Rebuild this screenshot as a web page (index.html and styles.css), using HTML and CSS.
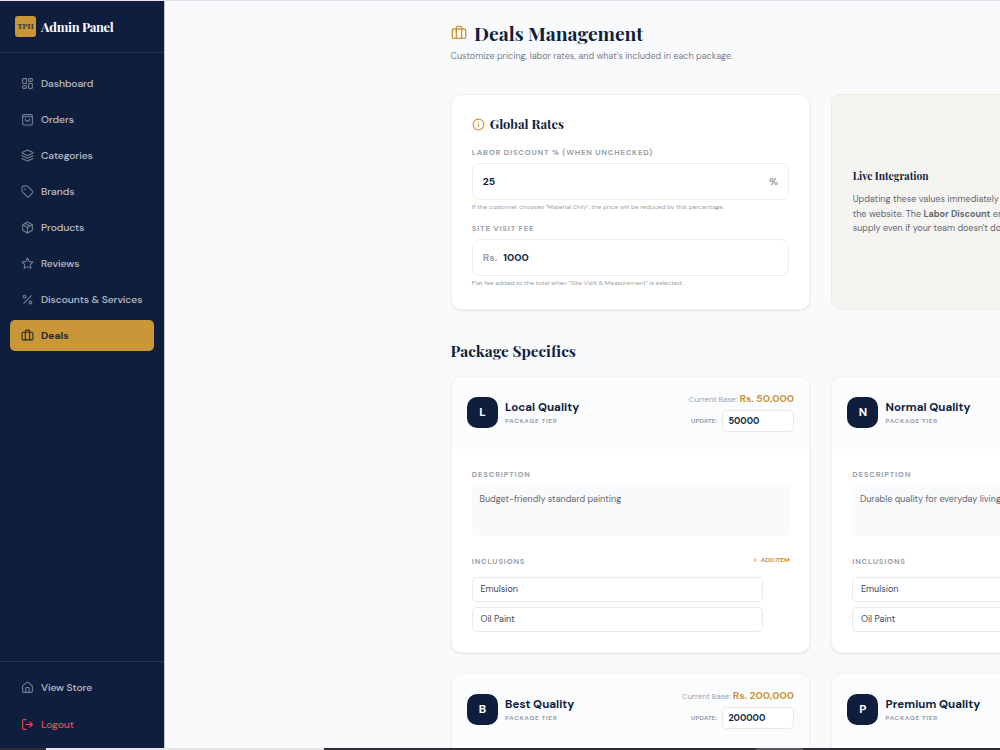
FILE: index.html
```html
<!DOCTYPE html>
<html lang="en">
<head>
    <meta charset="UTF-8">
    <meta name="viewport" content="width=device-width, initial-scale=1.0">
    <title>Deals Management - Admin Panel</title>
    <link rel="stylesheet" href="styles.css">
</head>
<body>
    <div class="app">
        <aside class="sidebar">
            <div class="brand">
                <div class="brand-logo">TPH</div>
                <span class="brand-name">Admin Panel</span>
            </div>
            <nav class="nav">
                <a class="nav-link"><svg class="icon" viewBox="0 0 24 24"><rect x="3" y="3" width="7" height="9" rx="1"/><rect x="14" y="3" width="7" height="5" rx="1"/><rect x="14" y="12" width="7" height="9" rx="1"/><rect x="3" y="16" width="7" height="5" rx="1"/></svg><span>Dashboard</span></a>
                <a class="nav-link"><svg class="icon" viewBox="0 0 24 24"><rect x="3" y="3" width="18" height="19" rx="2.5"/><path d="M3 7h18M8 11a4 4 0 0 0 8 0"/></svg><span>Orders</span></a>
                <a class="nav-link"><svg class="icon" viewBox="0 0 24 24"><path d="M12.8 2.2a2 2 0 0 0-1.6 0L2.6 6.1a1 1 0 0 0 0 1.8l8.6 3.9a2 2 0 0 0 1.6 0l8.6-3.9a1 1 0 0 0 0-1.8z"/><path d="M2 12a1 1 0 0 0 .6.9l8.6 3.9a2 2 0 0 0 1.6 0l8.6-3.9A1 1 0 0 0 22 12"/><path d="M2 17a1 1 0 0 0 .6.9l8.6 3.9a2 2 0 0 0 1.6 0l8.6-3.9A1 1 0 0 0 22 17"/></svg><span>Categories</span></a>
                <a class="nav-link"><svg class="icon" viewBox="0 0 24 24"><path d="M12.6 2.6A2 2 0 0 0 11.2 2H4a2 2 0 0 0-2 2v7.2a2 2 0 0 0 .6 1.4l8.7 8.7a2.4 2.4 0 0 0 3.4 0l6.6-6.6a2.4 2.4 0 0 0 0-3.4z"/><circle cx="7.5" cy="7.5" r=".6"/></svg><span>Brands</span></a>
                <a class="nav-link"><svg class="icon" viewBox="0 0 24 24"><path d="M11 21.7a2 2 0 0 0 2 0l7-4A2 2 0 0 0 21 16V8a2 2 0 0 0-1-1.7l-7-4a2 2 0 0 0-2 0l-7 4A2 2 0 0 0 3 8v8a2 2 0 0 0 1 1.7z"/><path d="M12 22V12M3.3 7L12 12l8.7-5M7.5 4.3l9 5.1"/></svg><span>Products</span></a>
                <a class="nav-link"><svg class="icon" viewBox="0 0 24 24"><path d="M12 2l3.1 6.3 6.9 1-5 4.9 1.2 6.8-6.2-3.2L5.8 21 7 14.2l-5-4.9 6.9-1z"/></svg><span>Reviews</span></a>
                <a class="nav-link"><svg class="icon" viewBox="0 0 24 24"><path d="M19 5L5 19"/><circle cx="6.5" cy="6.5" r="2.5"/><circle cx="17.5" cy="17.5" r="2.5"/></svg><span>Discounts &amp; Services</span></a>
                <a class="nav-link active"><svg class="icon" viewBox="0 0 24 24"><rect x="2" y="6" width="20" height="14" rx="2"/><path d="M8 20V4a2 2 0 0 1 2-2h4a2 2 0 0 1 2 2v16"/></svg><span>Deals</span></a>
            </nav>
            <div class="sidebar-footer">
                <a class="nav-link"><svg class="icon" viewBox="0 0 24 24"><path d="M15 21v-8a1 1 0 0 0-1-1h-4a1 1 0 0 0-1 1v8"/><path d="M3 10a2 2 0 0 1 .7-1.5l7-6a2 2 0 0 1 2.6 0l7 6A2 2 0 0 1 21 10v9a2 2 0 0 1-2 2H5a2 2 0 0 1-2-2z"/></svg><span>View Store</span></a>
                <a class="nav-link logout"><svg class="icon" viewBox="0 0 24 24"><path d="M9 21H5a2 2 0 0 1-2-2V5a2 2 0 0 1 2-2h4M16 17l5-5-5-5M21 12H9"/></svg><span>Logout</span></a>
            </div>
        </aside>

        <main class="main">
            <header class="page-header">
                <h1 class="page-title"><svg class="icon" viewBox="0 0 24 24"><rect x="2" y="6" width="20" height="14" rx="2"/><path d="M8 20V4a2 2 0 0 1 2-2h4a2 2 0 0 1 2 2v16"/></svg><span>Deals Management</span></h1>
                <p class="page-subtitle">Customize pricing, labor rates, and what's included in each package.</p>
            </header>

            <section class="grid">
                <div class="card rates-card">
                    <h2 class="card-title"><svg class="icon" viewBox="0 0 24 24"><circle cx="12" cy="12" r="10"/><path d="M12 16v-4M12 8h.01"/></svg><span>Global Rates</span></h2>
                    <div class="label">LABOR DISCOUNT % (WHEN UNCHECKED)</div>
                    <div class="input"><span>25</span><span class="suffix">%</span></div>
                    <p class="hint">If the customer chooses "Material Only", the price will be reduced by this percentage.</p>
                    <div class="label">SITE VISIT FEE</div>
                    <div class="input"><span class="prefix">Rs.</span><span>1000</span></div>
                    <p class="hint">Flat fee added to the total when "Site Visit &amp; Measurement" is selected.</p>
                </div>
                <div class="card info-card">
                    <h3 class="info-title">Live Integration</h3>
                    <p class="info-text">Updating these values immediately<br>the website. The <b>Labor Discount</b> ensures<br>supply even if your team doesn't do</p>
                </div>
            </section>

            <h2 class="section-title">Package Specifics</h2>

            <section class="grid">
                <div class="card package">
                    <div class="package-head">
                        <div class="badge">L</div>
                        <div class="package-name">
                            <h3>Local Quality</h3>
                            <p>PACKAGE TIER</p>
                        </div>
                        <div class="package-price">
                            <div class="base">Current Base: <span class="amount">Rs. 50,000</span></div>
                            <div class="update"><span class="update-label">UPDATE:</span><span class="price-input">50000</span></div>
                        </div>
                    </div>
                    <div class="package-body">
                        <div class="label">DESCRIPTION</div>
                        <div class="textarea">Budget-friendly standard painting</div>
                        <div class="inclusions-head">
                            <div class="label">INCLUSIONS</div>
                            <div class="add-item"><svg class="icon" viewBox="0 0 24 24"><path d="M5 12h14M12 5v14"/></svg><span>ADD ITEM</span></div>
                        </div>
                        <div class="item">Emulsion</div>
                        <div class="item">Oil Paint</div>
                    </div>
                </div>
                <div class="card package">
                    <div class="package-head">
                        <div class="badge">N</div>
                        <div class="package-name">
                            <h3>Normal Quality</h3>
                            <p>PACKAGE TIER</p>
                        </div>
                    </div>
                    <div class="package-body">
                        <div class="label">DESCRIPTION</div>
                        <div class="textarea">Durable quality for everyday living</div>
                        <div class="inclusions-head">
                            <div class="label">INCLUSIONS</div>
                        </div>
                        <div class="item">Emulsion</div>
                        <div class="item">Oil Paint</div>
                    </div>
                </div>
                <div class="card package">
                    <div class="package-head">
                        <div class="badge">B</div>
                        <div class="package-name">
                            <h3>Best Quality</h3>
                            <p>PACKAGE TIER</p>
                        </div>
                        <div class="package-price">
                            <div class="base">Current Base: <span class="amount">Rs. 200,000</span></div>
                            <div class="update"><span class="update-label">UPDATE:</span><span class="price-input">200000</span></div>
                        </div>
                    </div>
                </div>
                <div class="card package">
                    <div class="package-head">
                        <div class="badge">P</div>
                        <div class="package-name">
                            <h3>Premium Quality</h3>
                            <p>PACKAGE TIER</p>
                        </div>
                    </div>
                </div>
            </section>
        </main>
    </div>
    <div class="bottom-edge"><span class="edge-light"></span><span class="edge-mid"></span></div>
</body>
</html>
```
FILE: styles.css
```css
* {
    box-sizing: border-box;
    margin: 0;
    padding: 0;
}
body {
    width: 1000px;
    height: 750px;
    overflow: hidden;
    display: flex;
    flex-direction: column;
    border-top: 1px solid #e9dff0;
    background: #f9fafc;
    color: #101e3e;
    font-family: "DM Sans", Inter, sans-serif;
    font-size: 9px;
}
.app {
    display: flex;
    height: 747px;
    overflow: hidden;
}
.icon {
    width: 13px;
    height: 13px;
    flex: none;
    fill: none;
    stroke: currentColor;
    stroke-width: 2;
    stroke-linecap: round;
    stroke-linejoin: round;
}

/* Sidebar */
.sidebar {
    width: 165px;
    flex: none;
    display: flex;
    flex-direction: column;
    background: #101e3e;
    border-right: 1px solid #c5cad3;
}
.brand {
    height: 52px;
    flex: none;
    display: flex;
    align-items: center;
    gap: 5px;
    padding-left: 15px;
    border-bottom: 1px solid #27334f;
}
.brand-logo {
    width: 21px;
    height: 21px;
    border-radius: 3px;
    background: #c99638;
    color: #30302f;
    font: bold 7.7px/21px "Playfair Display", "Liberation Serif", serif;
    text-align: center;
}
.brand-name {
    color: #fff;
    font: bold 12.86px/20px "Playfair Display", "Liberation Serif", serif;
    letter-spacing: -0.32px;
    white-space: nowrap;
}
.nav {
    flex: 1;
    display: flex;
    flex-direction: column;
    gap: 5px;
    padding: 15px 10px;
}
.nav-link {
    height: 31px;
    display: flex;
    align-items: center;
    gap: 7px;
    padding-left: 11px;
    border-radius: 5px;
    color: #bbc0c9;
    font-size: 10.3px;
    font-weight: 500;
    letter-spacing: -0.08px;
    white-space: nowrap;
}
.nav-link .icon {
    opacity: 0.6;
}
.nav-link.active {
    background: #c99638;
    color: #26292f;
    font-weight: 700;
    letter-spacing: 0;
}
.nav-link.active .icon,
.nav-link.logout .icon {
    opacity: 1;
}
.nav-link.logout {
    color: #f04b57;
}
.sidebar-footer {
    height: 87px;
    display: flex;
    flex-direction: column;
    gap: 6px;
    padding: 10px 10px 9px;
    border-top: 1px solid #27334f;
}
.sidebar-footer .nav-link {
    flex: none;
}

/* Content */
.main {
    flex: none;
    width: 1026px;
    padding: 20px 0 0 285.5px;
}
.page-header {
    height: 72.6px;
}
.page-title {
    display: flex;
    align-items: center;
    gap: 7.5px;
    height: 25px;
    font: bold 19.28px/25px "Playfair Display", "Liberation Serif", serif;
    white-space: nowrap;
}
.page-title .icon {
    width: 16px;
    height: 16px;
    margin-top: -2px;
    color: #c99638;
}
.page-subtitle {
    margin-top: 3px;
    color: #7b818c;
    font-size: 9px;
    line-height: 14px;
    white-space: nowrap;
}
.grid {
    display: grid;
    grid-template-columns: 359.9px 359.9px;
    gap: 20px 20.6px;
}
.card {
    background: #fff;
    border: 1px solid #f1f2f5;
    border-radius: 10px;
    box-shadow: 0 1px 2px rgba(16, 30, 62, 0.1);
    overflow: hidden;
}
.rates-card {
    height: 216.6px;
    padding: 20.5px 20px 0 20.3px;
}
.card-title {
    display: flex;
    align-items: center;
    gap: 5px;
    height: 18px;
    font: bold 12.86px/18px "Playfair Display", "Liberation Serif", serif;
}
.card-title .icon {
    color: #c99638;
}
.label {
    color: #9a9faa;
    font-size: 7.71px;
    font-weight: 700;
    line-height: 10px;
    letter-spacing: 0.77px;
    white-space: nowrap;
}
.rates-card .label {
    margin-top: 14.4px;
}
.input {
    height: 37.4px;
    display: flex;
    align-items: center;
    gap: 6px;
    margin-top: 5.6px;
    padding: 0 10px;
    border: 1px solid #eceef1;
    border-radius: 8px;
    font-size: 10.3px;
    font-weight: 700;
}
.input .suffix {
    margin-left: auto;
    color: #9a9faa;
}
.input .prefix {
    color: #9a9faa;
}
.hint {
    margin-top: 3px;
    color: #9a9faa;
    font-size: 6.43px;
    line-height: 9px;
    white-space: nowrap;
}
.rates-card .hint + .label {
    margin-top: 10.6px;
}
.info-card {
    display: flex;
    flex-direction: column;
    justify-content: center;
    padding: 1px 20.7px 0;
    background: #f6f4f0;
    border-color: #f0ece4;
    box-shadow: none;
}
.info-title {
    font: bold 10.3px/14px "Playfair Display", "Liberation Serif", serif;
}
.info-text {
    margin-top: 9px;
    color: #626874;
    font-size: 9px;
    line-height: 14.7px;
    white-space: nowrap;
}
.section-title {
    margin: 31px 0 14.8px;
    font: bold 15.43px/20px "Playfair Display", "Liberation Serif", serif;
}

/* Packages */
.package {
    height: 277px;
}
.package-head {
    height: 72px;
    display: flex;
    align-items: center;
    gap: 7.2px;
    padding: 0 15.4px;
    background: #fbfcfe;
}
.badge {
    width: 31px;
    height: 31px;
    margin-top: -1px;
    border-radius: 10px;
    background: #101e3e;
    color: #fff;
    font-size: 11.57px;
    font-weight: 700;
    line-height: 31px;
    text-align: center;
}
.package-name {
    white-space: nowrap;
}
.package-name h3 {
    padding-top: 1px;
    font-size: 11.57px;
    font-weight: 700;
    line-height: 16px;
}
.package-name p {
    color: #9a9faa;
    font-size: 6.43px;
    font-weight: 700;
    line-height: 10px;
    letter-spacing: 0.64px;
}
.package-price {
    display: flex;
    flex-direction: column;
    align-items: flex-end;
    gap: 3px;
    margin: -2px 0 0 auto;
    white-space: nowrap;
}
.base {
    color: #9a9faa;
    font-size: 7.8px;
    line-height: 15px;
}
.amount {
    color: #c99638;
    font-size: 10.3px;
    font-weight: 700;
}
.update {
    display: flex;
    align-items: center;
    gap: 5px;
}
.update-label {
    color: #9a9faa;
    font-size: 6.43px;
    font-weight: 700;
}
.price-input {
    width: 72px;
    height: 22px;
    padding-left: 5.4px;
    border: 1px solid #e6e8ec;
    border-radius: 5px;
    background: #fff;
    font-size: 9px;
    font-weight: 700;
    line-height: 20px;
}
.package-body {
    padding: 20.5px 20px 0 20.3px;
}
.textarea {
    height: 51px;
    margin-top: 6px;
    padding: 6.5px 7.7px;
    border-radius: 5px;
    background: #f9fafc;
    color: #626874;
    font-size: 9px;
    line-height: 14px;
    white-space: nowrap;
}
.inclusions-head {
    display: flex;
    justify-content: space-between;
    margin: 20px 0 10.5px;
}
.add-item {
    display: flex;
    align-items: center;
    gap: 3px;
    height: 8px;
    color: #c99638;
    font-size: 6.43px;
    font-weight: 700;
    letter-spacing: -0.2px;
}
.add-item .icon {
    width: 6px;
    height: 6px;
}
.item {
    width: 291.7px;
    height: 25px;
    margin-bottom: 5px;
    padding-left: 7.7px;
    border: 1px solid #e8eaed;
    border-radius: 5px;
    color: #3e4859;
    font-size: 9px;
    line-height: 23px;
}

/* Screen edge under the page */
.bottom-edge {
    height: 2px;
    flex: none;
    display: flex;
    gap: 432px;
    padding-left: 46px;
    background: #2e2d31;
}
.edge-light {
    width: 278px;
    background: #e6e6e8;
}
.edge-mid {
    width: 47px;
    background: #5a595d;
}
```
